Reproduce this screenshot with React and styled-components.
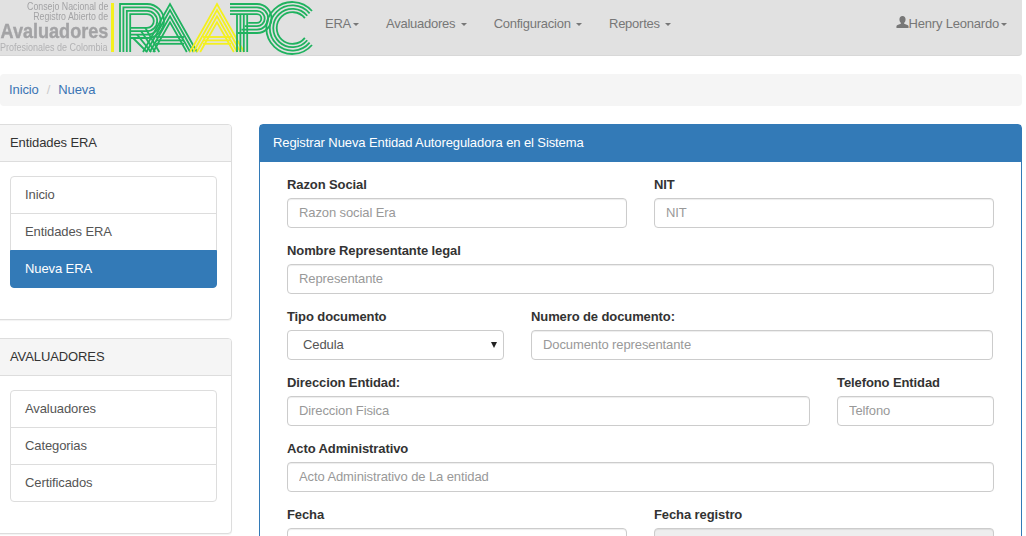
import React from 'react'
import styled, { createGlobalStyle } from 'styled-components'

const GlobalStyle = createGlobalStyle`
  html, body {
    margin: 0;
    height: 536px;
    overflow: hidden;
    background: #fff;
  }
  * { box-sizing: border-box; }
  body {
    font-family: "Liberation Sans", Arial, sans-serif;
    font-size: 13px;
    letter-spacing: -0.1px;
    line-height: 20px;
    color: #333;
  }
`

const GREEN = '#1fb25f'
const YELLOW = '#f4f01f'
const STEP = 3.4

const offsets = [0, 1, 2, 3].map(i => i * STEP)

// nested chevrons of one "A", legs stay parallel
const Chevrons = ({ apex, color }) => (
  <g fill="none" stroke={color} strokeWidth="1.8">
    {offsets.map(d => (
      <path key={d} d={`M${apex - 27 + d} 52 L${apex} ${4 + d * 1.8} L${apex + 27 - d} 52`} />
    ))}
    {[37, 40.4, 43.8].map(y => (
      <path key={y} d={`M${apex - 14} ${y} H${apex + 14}`} />
    ))}
  </g>
)

const RaapcMark = () => (
  <MarkSvg viewBox="0 0 204 56" width="204" height="56">
    <rect x="0" y="3" width="3" height="49" fill={YELLOW} />
    <g fill="none" stroke={GREEN} strokeWidth="1.8">
      {/* R */}
      {offsets.map(d => (
        <path key={`r${d}`} d={`M${9 + d} 52 V${4 + d} H${36} A${17 - d} ${17 - d} 0 0 1 ${36} ${38 - d} H${20}`} />
      ))}
      {offsets.map(d => (
        <path key={`l${d}`} d={`M${22 + d * 1.2} ${38 - d} L${36 + d * 1.2} 52`} />
      ))}
    </g>
    <Chevrons apex={59} color={GREEN} />
    <Chevrons apex={106} color={YELLOW} />
    <g fill="none" stroke={GREEN} strokeWidth="1.8">
      {/* P */}
      {offsets.map(d => (
        <path key={`p${d}`} d={`M${119} ${4 + d} H${146} A${14.5 - d} ${14.5 - d} 0 0 1 ${146} ${33 - d} H${127 + d}`} />
      ))}
      {offsets.map(d => (
        <path key={`ps${d}`} d={`M${126 + d} ${14} V52`} />
      ))}
      {/* C */}
      {offsets.map(d => (
        <path key={`c${d}`} d={`M${201 - d * 0.7} ${11 + d * 0.7} A${26 - d} ${26 - d} 0 1 0 ${201 - d * 0.7} ${45 - d * 0.7}`} />
      ))}
    </g>
  </MarkSvg>
)

const Caret = () => <CaretMark />

const UserIcon = () => (
  <UserSvg viewBox="0 0 14 14" width="13" height="14">
    <path fill="#777" d="M7 0.5c2.1 0 3.3 1.7 3.3 3.7 0 1.5-.6 2.9-1.5 3.6v1.1c1.8.5 4.2 1.3 4.7 2.4v2.2H.5v-2.2c.5-1.1 2.9-1.9 4.7-2.4V7.800C4.300 7.100 3.700 5.700 3.700 4.200 3.700 2.200 4.900.5 7 .5z" />
  </UserSvg>
)

const navItems = [
  { label: 'ERA', tight: true },
  { label: 'Avaluadores' },
  { label: 'Configuracion' },
  { label: 'Reportes' },
]

const Navbar = () => (
  <NavbarWrap>
    <Brand>
      <BrandText>
        <BrandLine>Consejo Nacional de</BrandLine>
        <BrandLine>Registro Abierto de</BrandLine>
        <BrandBig>Avaluadores</BrandBig>
        <BrandSmall>Profesionales de Colombia</BrandSmall>
      </BrandText>
      <RaapcMark />
    </Brand>
    <NavList>
      {navItems.map(item => (
        <NavLink key={item.label} href="#">
          {item.label}{item.tight ? '' : ' '}<Caret />
        </NavLink>
      ))}
    </NavList>
    <UserLink href="#">
      <UserIcon />Henry Leonardo<Caret />
    </UserLink>
  </NavbarWrap>
)

const sidePanels = [
  { title: 'Entidades ERA', items: ['Inicio', 'Entidades ERA', 'Nueva ERA'], active: 'Nueva ERA' },
  { title: 'AVALUADORES', items: ['Avaluadores', 'Categorias', 'Certificados'] },
]

const Sidebar = () => (
  <SideColumn>
    {sidePanels.map(panel => (
      <SidePanel key={panel.title}>
        <SideHeading>{panel.title}</SideHeading>
        <SideBody>
          <ListGroup>
            {panel.items.map(item => (
              <ListItem key={item} href="#" $active={item === panel.active}>{item}</ListItem>
            ))}
          </ListGroup>
        </SideBody>
      </SidePanel>
    ))}
  </SideColumn>
)

const Field = ({ label, placeholder, disabled, $w }) => (
  <FieldWrap $w={$w}>
    <FieldLabel>{label}</FieldLabel>
    <TextInput placeholder={placeholder} disabled={disabled} readOnly />
  </FieldWrap>
)

const RegisterForm = () => (
  <MainPanel>
    <MainHeading>Registrar Nueva Entidad Autoreguladora en el Sistema</MainHeading>
    <MainBody>
      <FormRow>
        <Field label="Razon Social" placeholder="Razon social Era" $w="340px" />
        <Field label="NIT" placeholder="NIT" $w="340px" />
      </FormRow>
      <FormRow>
        <Field label="Nombre Representante legal" placeholder="Representante" />
      </FormRow>
      <FormRow>
        <FieldWrap $w="217px">
          <FieldLabel>Tipo documento</FieldLabel>
          <SelectWrap>
            <SelectInput defaultValue="Cedula">
              <option>Cedula</option>
            </SelectInput>
          </SelectWrap>
        </FieldWrap>
        <Field label="Numero de documento:" placeholder="Documento representante" $w="462px" />
      </FormRow>
      <FormRow>
        <Field label="Direccion Entidad:" placeholder="Direccion Fisica" $w="523px" />
        <Field label="Telefono Entidad" placeholder="Telfono" $w="157px" />
      </FormRow>
      <FormRow>
        <Field label="Acto Administrativo" placeholder="Acto Administrativo de La entidad" />
      </FormRow>
      <FormRow>
        <Field label="Fecha" $w="340px" />
        <Field label="Fecha registro" disabled $w="340px" />
      </FormRow>
    </MainBody>
  </MainPanel>
)

export default function App() {
  return (
    <>
      <GlobalStyle />
      <Page>
        <Navbar />
        <Breadcrumb>
          <Crumb href="#">Inicio</Crumb>
          <CrumbSep>/</CrumbSep>
          <Crumb href="#">Nueva</Crumb>
        </Breadcrumb>
        <Content>
          <Sidebar />
          <RegisterForm />
        </Content>
      </Page>
    </>
  )
}

const Page = styled.div`
  width: 1022px;
  height: 536px;
  overflow: hidden;
`

/** Navbar **/
const NavbarWrap = styled.nav`
  display: flex;
  align-items: flex-start;
  height: 56px;
  background: #e1e1e1;
  border-bottom: 1px solid #d8d8d8;
  border-radius: 0 0 4px 0;
  margin-bottom: 18px;
`

const Brand = styled.div`
  display: flex;
  align-items: flex-start;
  width: 325px;
  height: 55px;
  overflow: hidden;
  flex-shrink: 0;
`

const BrandText = styled.div`
  display: flex;
  flex-direction: column;
  align-items: flex-end;
  width: 108px;
  flex-shrink: 0;
  margin-right: 3px;
  padding-top: 2px;
  color: #a3a3a5;
  white-space: nowrap;
  letter-spacing: 0;
  filter: blur(0.25px);
`

const BrandLine = styled.div`
  font-size: 10px;
  line-height: 10px;
  transform: scaleX(0.88);
  transform-origin: right center;
`

const BrandBig = styled.div`
  font-size: 21px;
  line-height: 18px;
  font-weight: bold;
  -webkit-text-stroke: 0.4px #a3a3a5;
  transform: scaleX(0.86);
  transform-origin: right center;
`

const BrandSmall = styled.div`
  font-size: 10px;
  line-height: 10px;
  margin-top: 3px;
  transform: scaleX(0.9);
  transform-origin: right center;
  color: #b2b2b4;
`

const MarkSvg = styled.svg`
  display: block;
  flex-shrink: 0;
  filter: blur(0.25px);
`

const NavList = styled.div`
  display: flex;
  gap: 27px;
  padding-top: 14px;
  letter-spacing: -0.25px;
`

const NavLink = styled.a`
  color: #777;
  text-decoration: none;
  white-space: pre;
`

const CaretMark = styled.span`
  display: inline-block;
  width: 0;
  height: 0;
  margin-left: 2px;
  vertical-align: middle;
  border-top: 3px solid #777;
  border-right: 3px solid transparent;
  border-left: 3px solid transparent;
`

const UserLink = styled.a`
  margin-left: auto;
  margin-right: 15px;
  padding-top: 14px;
  color: #777;
  text-decoration: none;
  white-space: nowrap;
  letter-spacing: -0.2px;
`

const UserSvg = styled.svg`
  vertical-align: -1px;
`

/** Breadcrumb **/
const Breadcrumb = styled.div`
  display: flex;
  gap: 8px;
  height: 32px;
  align-items: center;
  padding: 0 9px;
  background: #f5f5f5;
  border-radius: 4px;
  margin-bottom: 18px;
`

const Crumb = styled.a`
  color: #3a74b4;
  text-decoration: none;
`

const CrumbSep = styled.span`
  color: #ccc;
`

/** Layout **/
const Content = styled.div`
  display: flex;
  align-items: flex-start;
  gap: 27px;
  margin-left: -6px;
`

const SideColumn = styled.div`
  display: flex;
  flex-direction: column;
  gap: 18px;
  width: 238px;
  flex-shrink: 0;
`

const SidePanel = styled.section`
  background: #fff;
  border: 1px solid #ddd;
  border-radius: 4px;
  box-shadow: 0 1px 1px rgba(0, 0, 0, .05);
`

const SideHeading = styled.div`
  padding: 8px 15px;
  height: 37px;
  background: #f5f5f5;
  border-bottom: 1px solid #ddd;
  border-radius: 3px 3px 0 0;
`

const SideBody = styled.div`
  padding: 14px 14px 31px 15px;
`

const ListGroup = styled.div`
  display: flex;
  flex-direction: column;
`

const ListItem = styled.a`
  display: block;
  padding: 8px 14px;
  margin-bottom: -1px;
  height: 38px;
  border: 1px solid ${p => (p.$active ? '#337ab7' : '#ddd')};
  background: ${p => (p.$active ? '#337ab7' : '#fff')};
  color: ${p => (p.$active ? '#fff' : '#555')};
  text-decoration: none;
  &:first-child { border-radius: 4px 4px 0 0; }
  &:last-child { border-radius: 0 0 4px 4px; margin-bottom: 0; }
`

/** Main panel **/
const MainPanel = styled.section`
  flex: 1;
  background: #fff;
  border: 1px solid #337ab7;
  border-radius: 4px;
`

const MainHeading = styled.div`
  padding: 8px 13px;
  height: 37px;
  background: #337ab7;
  color: #fff;
  white-space: nowrap;
`

const MainBody = styled.div`
  display: flex;
  flex-direction: column;
  gap: 13px;
  padding: 13px 27px 20px;
`

const FormRow = styled.div`
  display: flex;
  gap: 27px;
`

const FieldWrap = styled.div`
  width: ${p => p.$w || '100%'};
`

const FieldLabel = styled.label`
  display: block;
  font-weight: bold;
  margin-bottom: 3px;
  white-space: nowrap;
`

const TextInput = styled.input`
  display: block;
  width: 100%;
  height: 30px;
  padding: 4px 11px 6px;
  border: 1px solid #ccc;
  border-radius: 4px;
  background: ${p => (p.disabled ? '#eee' : '#fff')};
  box-shadow: inset 0 1px 1px rgba(0, 0, 0, .075);
  font: 13px/20px "Liberation Sans", Arial, sans-serif;
  letter-spacing: -0.1px;
  color: #555;
  &::placeholder { color: #999; opacity: 1; }
`

const SelectWrap = styled.div`
  position: relative;
  &::after {
    content: '';
    position: absolute;
    right: 7px;
    top: 12px;
    border-top: 6px solid #222;
    border-left: 3.5px solid transparent;
    border-right: 3.5px solid transparent;
  }
`

const SelectInput = styled.select`
  display: block;
  width: 100%;
  height: 30px;
  padding: 4px 15px;
  appearance: none;
  border: 1px solid #ccc;
  border-radius: 4px;
  background: #fff;
  font: 13px/20px "Liberation Sans", Arial, sans-serif;
  letter-spacing: -0.1px;
  color: #555;
`
